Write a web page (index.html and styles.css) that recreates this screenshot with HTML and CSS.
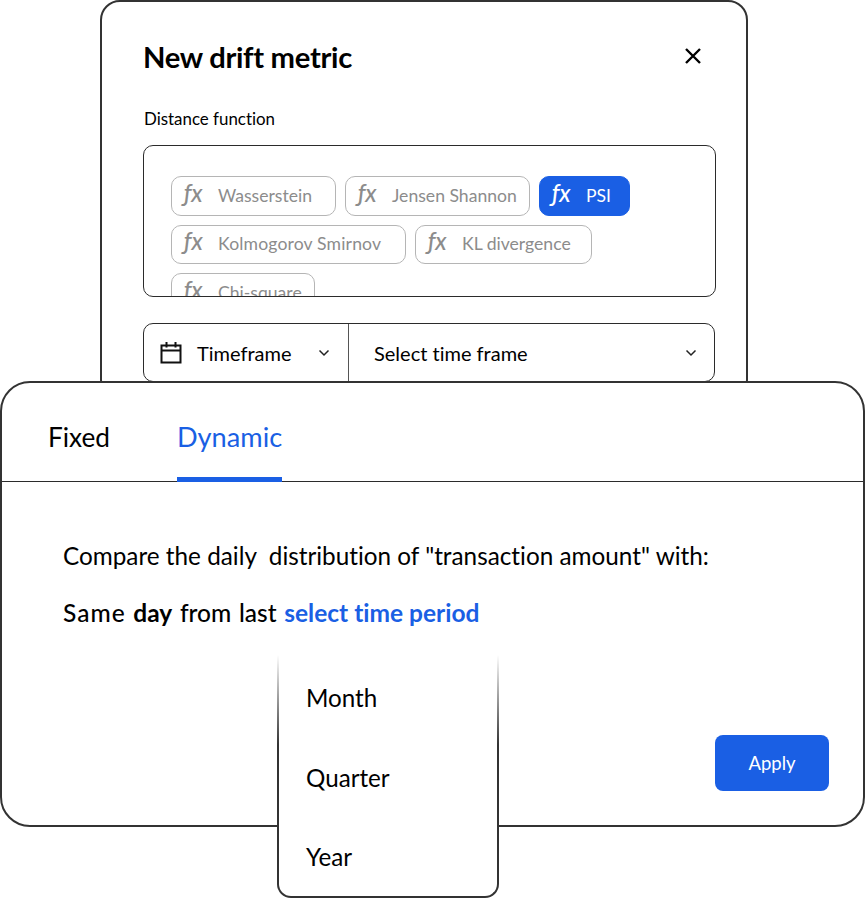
FILE: index.html
```html
<!DOCTYPE html>
<html lang="en">
<head>
    <meta charset="UTF-8">
    <meta name="viewport" content="width=device-width, initial-scale=1.0">
    <title>New drift metric</title>
    <link rel="stylesheet" href="styles.css">
</head>
<body>
    <div class="page">
        <div class="metric-card">
            <div class="metric-head">
                <h2>New drift metric</h2>
                <svg class="close-icon" width="20" height="20" viewBox="0 0 20 20"><path d="M3 3 L17 17 M17 3 L3 17"/></svg>
            </div>
            <div class="field-label">Distance function</div>
            <div class="chip-box">
                <div class="chip-list">
                    <span class="chip chip-wasserstein"><i class="fx">ƒx</i>Wasserstein</span>
                    <span class="chip chip-jensen"><i class="fx">ƒx</i>Jensen Shannon</span>
                    <span class="chip chip-active"><i class="fx">ƒx</i>PSI</span>
                    <span class="chip chip-kolmogorov"><i class="fx">ƒx</i>Kolmogorov Smirnov</span>
                    <span class="chip chip-kl"><i class="fx">ƒx</i>KL divergence</span>
                    <span class="chip chip-chi"><i class="fx">ƒx</i>Chi-square</span>
                </div>
            </div>
            <div class="time-row">
                <div class="time-type">
                    <svg class="calendar-icon" width="22" height="24" viewBox="0 0 22 24"><path d="M1.5 4.5 H20.5 V21.5 H1.5 Z M1.5 9.5 H20.5 M6.5 1 V6.5 M15.5 1 V6.5"/></svg>
                    <span>Timeframe</span>
                    <svg class="chevron" width="12" height="8" viewBox="0 0 12 8"><path d="M1.5 1.5 L6 6 L10.5 1.5"/></svg>
                </div>
                <div class="time-select">
                    <span>Select time frame</span>
                    <svg class="chevron" width="12" height="8" viewBox="0 0 12 8"><path d="M1.5 1.5 L6 6 L10.5 1.5"/></svg>
                </div>
            </div>
        </div>

        <div class="period-card">
            <div class="tabs">
                <div class="tab">Fixed</div>
                <div class="tab tab-active">Dynamic</div>
            </div>
            <div class="period-body">
                <p class="compare">Compare the daily&nbsp; distribution of "transaction amount" with:</p>
                <p class="same"><span class="same-word">Same</span> <b>day</b> from last <a href="#" class="period-link">select time period</a></p>
                <button class="apply" type="button">Apply</button>
            </div>
        </div>

        <div class="period-menu">
            <div class="menu-item">Month</div>
            <div class="menu-item">Quarter</div>
            <div class="menu-item">Year</div>
        </div>
    </div>
</body>
</html>
```

FILE: styles.css
```css
* {
    box-sizing: border-box;
}
body {
    font-family: Lato, "Open Sans", sans-serif;
    font-variant-ligatures: none;
    background-color: white;
    color: #000;
    margin: 0;
}
.page {
    position: relative;
    width: 867px;
    height: 899px;
    overflow: hidden;
}
.metric-card {
    width: 648px;
    height: 400px;
    margin-left: 100px;
    padding: 0 32px 0 42px;
    border: 2px solid #333;
    border-radius: 20px;
    background: white;
}
.metric-head {
    display: flex;
    justify-content: space-between;
    align-items: flex-start;
    height: 111px;
    padding-top: 37px;
}
.metric-head h2 {
    margin: 0 0 0 -1px;
    font-size: 29.2px;
    font-weight: 700;
    letter-spacing: -0.3px;
}
.close-icon {
    margin: 7px 11px 0 0;
    fill: none;
    stroke: #000;
    stroke-width: 2.4;
}
.field-label {
    font-size: 16.9px;
    line-height: 20px;
    margin-top: -4px;
    margin-bottom: 16px;
}
.chip-box {
    width: 573px;
    height: 152px;
    margin-left: -1px;
    padding: 30px 20px 0 27px;
    border: 1px solid #2b2b2b;
    border-radius: 10px;
    overflow: hidden;
}
.chip-list {
    display: flex;
    flex-wrap: wrap;
    gap: 9px;
}
.chip {
    display: flex;
    align-items: center;
    height: 39.5px;
    padding-left: 12px;
    padding-bottom: 1px;
    border: 1px solid #b5b5b5;
    border-radius: 10px;
    font-size: 17.6px;
    color: #8c8c8c;
}
.chip-wasserstein { width: 165px; }
.chip-jensen { width: 185px; }
.chip-active { width: 91px; background: #1a5fe4; border-color: #1a5fe4; color: white; }
.chip-kolmogorov { width: 235px; letter-spacing: 0.15px; }
.chip-kl { width: 177px; }
.chip-chi { width: 144px; }
.fx {
    width: 34px;
    margin-bottom: 5px;
    font-family: Lato, sans-serif;
    font-size: 24px;
    line-height: 24px;
    font-style: italic;
    font-weight: 500;
    color: #8c8c8c;
}
.chip-active .fx {
    color: white;
}
.time-row {
    display: flex;
    width: 572px;
    height: 59px;
    margin-top: 26px;
    margin-left: -1px;
    border: 1px solid #2b2b2b;
    border-radius: 10px;
    font-size: 20px;
}
.time-type {
    display: flex;
    align-items: center;
    width: 205px;
    padding-left: 16px;
    border-right: 1px solid #555;
}
.time-type span {
    margin-left: 15px;
    margin-right: 26px;
}
.time-select {
    display: flex;
    align-items: center;
    justify-content: space-between;
    flex: 1;
    padding: 0 17px 0 25px;
}
.calendar-icon {
    fill: none;
    stroke: #111;
    stroke-width: 2;
}
.chevron {
    fill: none;
    stroke: #222;
    stroke-width: 1.5;
}
.period-card {
    position: relative;
    width: 865px;
    height: 446px;
    margin-top: -19px;
    border: 2px solid #333;
    border-radius: 30px;
    background: white;
}
.tabs {
    display: flex;
    gap: 67px;
    height: 99px;
    padding-left: 46px;
    border-bottom: 1.5px solid #2b2b2b;
    font-size: 26.2px;
}
.tab {
    padding-top: 38px;
    height: 99px;
}
.tab-active {
    font-size: 27.2px;
    padding-top: 37px;
    color: #1a5fe4;
    border-bottom: 5px solid #1a5fe4;
}
.period-body {
    position: relative;
    padding: 59px 0 0 61px;
    font-size: 24.3px;
}
.period-body p {
    margin: 0;
}
.compare {
    line-height: 30px;
    margin-bottom: 27px !important;
}
.same {
    line-height: 30px;
    font-size: 24.5px;
    font-weight: 500;
    word-spacing: 1.5px;
}
.same-word {
    letter-spacing: 1px;
}
.same b {
    font-weight: 700;
}
.period-link {
    color: #1a5fe4;
    font-weight: 700;
    word-spacing: 0;
    text-decoration: none;
}
.apply {
    position: absolute;
    left: 713px;
    top: 253px;
    width: 114px;
    height: 56px;
    border: none;
    border-radius: 8px;
    background-color: #1a5fe4;
    color: white;
    font-family: inherit;
    font-size: 18.5px;
}
.period-menu {
    position: absolute;
    left: 277px;
    top: 655px;
    width: 222px;
    height: 243px;
    padding-top: 16px;
    border: 2px solid #333;
    border-top: none;
    border-radius: 0 0 14px 14px;
    background: white;
}
.period-menu::before {
    content: "";
    position: absolute;
    left: -2px;
    right: -2px;
    top: 0;
    height: 90px;
    background: linear-gradient(white, rgba(255, 255, 255, 0));
}
.menu-item {
    position: relative;
    height: 79.5px;
    padding: 12px 0 0 27px;
    font-size: 24.2px;
}
```
